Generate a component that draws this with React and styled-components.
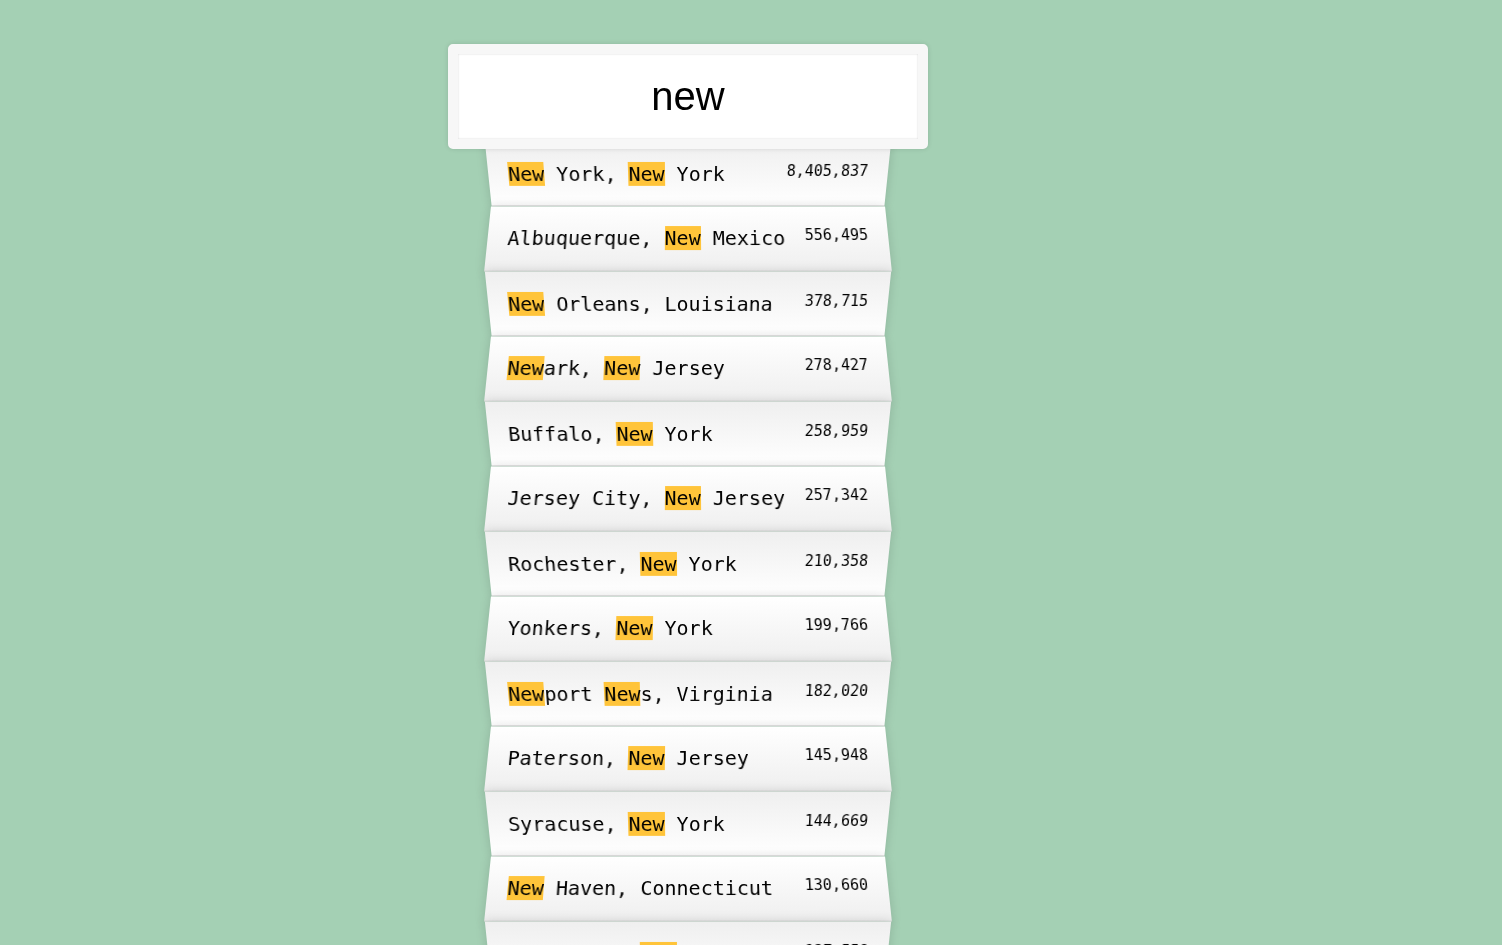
import React, { useState } from "react";
import styled, { createGlobalStyle } from "styled-components";

const cities = [
  ["New York", "New York", 8405837],
  ["Albuquerque", "New Mexico", 556495],
  ["New Orleans", "Louisiana", 378715],
  ["Newark", "New Jersey", 278427],
  ["Buffalo", "New York", 258959],
  ["Jersey City", "New Jersey", 257342],
  ["Rochester", "New York", 210358],
  ["Yonkers", "New York", 199766],
  ["Newport News", "Virginia", 182020],
  ["Paterson", "New Jersey", 145948],
  ["Syracuse", "New York", 144669],
  ["New Haven", "Connecticut", 130660],
  ["Elizabeth", "New Jersey", 127558],
  ["Las Cruces", "New Mexico", 101324],
  ["New Bedford", "Massachusetts", 95078],
  ["Rio Rancho", "New Mexico", 91956],
];

const GlobalStyle = createGlobalStyle`
  *, *:before, *:after { box-sizing: border-box; }
  html {
    background: #a4d0b4;
    font-size: 20px;
  }
  body {
    margin: 0;
    background: #a4d0b4;
    font-family: "DejaVu Sans Mono", monospace;
  }
`;

const SearchForm = styled.form`
  width: 400px;
  margin: 44px 0 0 488px;
`;

const SearchInput = styled.input`
  display: block;
  position: relative;
  z-index: 2;
  width: 480px;
  margin: 0 0 -10px -40px;
  padding: 20px;
  border: 10px solid #f7f7f7;
  border-radius: 5px;
  outline: 0;
  text-align: center;
  font-family: "Liberation Sans", Arial, sans-serif;
  font-size: 40px;
  color: #000;
  background: #fff;
  box-shadow: 0 0 5px rgba(0, 0, 0, 0.12), inset 0 0 2px rgba(0, 0, 0, 0.19);
`;

const Suggestions = styled.ul`
  margin: 0;
  padding: 0;
  position: relative;
`;

const Item = styled.li`
  list-style: none;
  margin: 0;
  padding: 20px;
  display: flex;
  justify-content: space-between;
  text-transform: capitalize;
  font-size: 20px;
  line-height: 24px;
  color: #000;
  border-bottom: 1px solid #d8d8d8;
  box-shadow: 0 0 10px rgba(0, 0, 0, 0.14);
  background: ${(p) =>
    p.$even
      ? "linear-gradient(to bottom, #ffffff 0%, #efefef 100%)"
      : "linear-gradient(to top, #ffffff 0%, #efefef 100%)"};
  transform: ${(p) =>
    p.$even
      ? "perspective(100px) rotateX(3deg) translateY(2px) scale(1.001)"
      : "perspective(100px) rotateX(-3deg) translateY(3px)"};
`;

const Name = styled.span`
  white-space: pre;
`;

const Hl = styled.span`
  background: #ffc43a;
`;

const Population = styled.span`
  font-size: 15px;
  line-height: 18px;
`;

function highlight(text, query) {
  const re = new RegExp(`(${query})`, "gi");
  return text.split(re).map((part, i) =>
    part.toLowerCase() === query.toLowerCase() ? <Hl key={i}>{part}</Hl> : part
  );
}

export default function App() {
  const [query, setQuery] = useState("new");
  const matches = cities.filter(
    ([c, s]) => c.toLowerCase().includes(query.toLowerCase()) || s.toLowerCase().includes(query.toLowerCase())
  );
  return (
    <>
      <GlobalStyle />
      <SearchForm onSubmit={(e) => e.preventDefault()}>
        <SearchInput value={query} onChange={(e) => setQuery(e.target.value)} placeholder="City or State" />
        <Suggestions>
          {matches.map(([city, state, pop], i) => (
            <Item key={city + state} $even={i % 2 === 1}>
              <Name>{highlight(`${city}, ${state}`, query || "\u0000")}</Name>
              <Population>{pop.toLocaleString("en-US")}</Population>
            </Item>
          ))}
        </Suggestions>
      </SearchForm>
    </>
  );
}
